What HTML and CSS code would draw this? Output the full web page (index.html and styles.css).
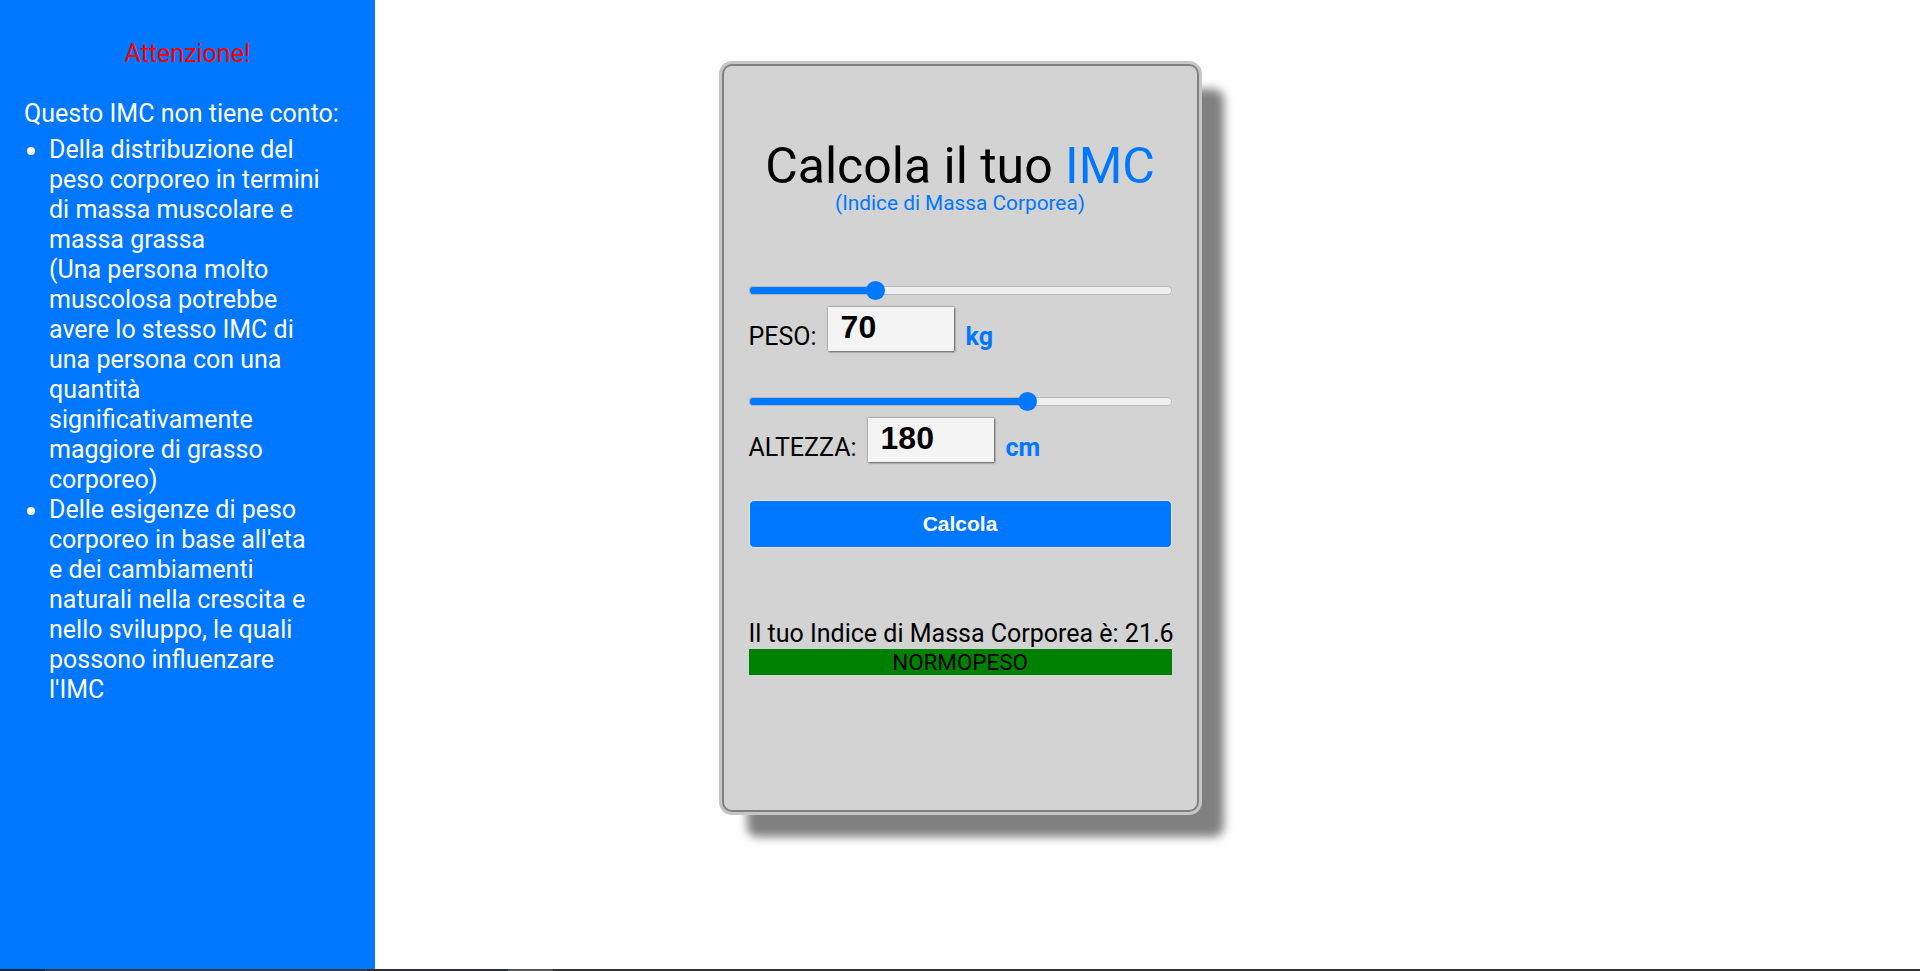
FILE: index.html
```html
<!DOCTYPE html>
<html lang="it">
<head>
<meta charset="utf-8">
<title>Calcola il tuo IMC</title>
<link rel="stylesheet" href="styles.css">
</head>
<body>
<div class="layout">
  <aside class="sidebar">
    <p class="warn">Attenzione!</p>
    <p class="intro">Questo IMC non tiene conto:</p>
    <ul class="notes">
      <li>Della distribuzione del peso corporeo in termini di massa muscolare e massa grassa<br>(Una persona molto muscolosa potrebbe avere lo stesso IMC di una persona con una quantità significativamente maggiore di grasso corporeo)</li>
      <li>Delle esigenze di peso corporeo in base all'eta e dei cambiamenti naturali nella crescita e nello sviluppo, le quali possono influenzare l'IMC</li>
    </ul>
  </aside>
  <main class="main">
    <section class="card">
      <h1 class="title">Calcola il tuo <span class="accent">IMC</span><span class="subtitle">(Indice di Massa Corporea)</span></h1>
      <input class="range range-first" type="range" min="0" max="240" value="70" style="--p:30.1%">
      <div class="field field-first">
        <label class="label" for="peso">PESO:</label>
        <input class="num" id="peso" type="text" value="70">
        <span class="unit">kg</span>
      </div>
      <input class="range range-second" type="range" min="100" max="220" value="180" style="--p:65.9%">
      <div class="field field-second">
        <label class="label" for="altezza">ALTEZZA:</label>
        <input class="num" id="altezza" type="text" value="180">
        <span class="unit">cm</span>
      </div>
      <button class="calc" type="button">Calcola</button>
      <p class="result">Il tuo Indice di Massa Corporea è: 21.6</p>
      <p class="status">NORMOPESO</p>
    </section>
  </main>
  <div class="spacer"></div>
</div>
<div class="bottombar">
  <span class="seg seg-a"></span>
  <span class="seg seg-b"></span>
  <span class="seg seg-c"></span>
  <span class="seg seg-d"></span>
  <span class="seg seg-e"></span>
</div>
</body>
</html>
```
FILE: styles.css
```css
html, body {
  margin: 0;
  padding: 0;
  background: #ffffff;
}

body {
  font-family: Roboto, "Liberation Sans", Arial, sans-serif;
  color: #000;
  overflow: hidden;
}

.layout {
  display: grid;
  grid-template-columns: 375px 1fr 375px;
  height: 971px;
}

/* ---------- sidebar ---------- */
.sidebar {
  background: #0077ff;
  color: #fff;
  font-size: 25px;
  line-height: 30px;
  padding: 39px 24px 0 24px;
}

.sidebar p {
  margin: 0;
}

.warn {
  color: #ff0000;
  text-align: center;
  margin-bottom: 30px !important;
}

.notes {
  margin: 6px 26px 0 0;
  padding: 0 0 0 25px;
}

/* ---------- main ---------- */
.main {
  display: flex;
  justify-content: center;
  align-items: flex-start;
}

.card {
  box-sizing: border-box;
  width: 477px;
  height: 748px;
  margin-top: 64px;
  padding: 0 25px;
  background: #d3d3d3;
  border: 2px solid #808080;
  border-radius: 10px;
  box-shadow: 0 0 0 3px #c6c6c6, 25px 25px 10px #808080;
  display: flex;
  flex-direction: column;
}

.title {
  margin: 74.5px 0 0 0;
  font-size: 50px;
  font-weight: 400;
  line-height: 50px;
  text-align: center;
}

.accent {
  color: #0077ff;
}

.subtitle {
  display: block;
  font-size: 20.8px;
  line-height: normal;
  color: #0077ff;
}

/* ---------- range ---------- */
.range {
  -webkit-appearance: none;
  appearance: none;
  display: block;
  width: 100%;
  height: 20px;
  margin: 0;
  padding: 0;
  background: transparent;
}

.range-first {
  margin-top: 66px;
}

.range-second {
  margin-top: 41px;
}

.range::-webkit-slider-runnable-track {
  height: 9px;
  border-radius: 5px;
  box-sizing: border-box;
  background: linear-gradient(to right, #0077ff 0, #0077ff var(--p), #efefef var(--p), #efefef 100%);
  box-shadow: inset 0 0 0 1px #b8b8b8;
}

.range::-webkit-slider-thumb {
  -webkit-appearance: none;
  appearance: none;
  width: 19px;
  height: 19px;
  margin-top: -5px;
  border-radius: 50%;
  background: #0077ff;
  border: none;
}

/* ---------- fields ---------- */
.field {
  display: flex;
  align-items: flex-end;
}

.field-first {
  margin-top: 6px;
}

.field-second {
  margin-top: 6px;
}

.label {
  font-size: 25px;
  line-height: 30px;
  margin: 0 11px -1px 0;
}

.num {
  box-sizing: border-box;
  width: 126px;
  height: 44px;
  padding: 3px 13px 5px 13px;
  margin: 0;
  border: 0;
  background: #f4f4f4;
  font-family: "Liberation Sans", Arial, sans-serif;
  font-weight: 700;
  font-size: 32px;
  line-height: 36px;
  color: #000;
  box-shadow: 0 0 2px rgba(0, 0, 0, 0.45), 1px 1px 2px rgba(0, 0, 0, 0.45);
}

.unit {
  font-size: 25px;
  line-height: 30px;
  font-weight: 700;
  color: #0077ff;
  margin: 0 0 -1px 12px;
}

/* ---------- button ---------- */
.calc {
  box-sizing: border-box;
  width: 100%;
  height: 48px;
  margin: 38px 0 0 0;
  border: 1px solid #e6e6e6;
  border-radius: 5px;
  background: #0077ff;
  color: #fff;
  font-family: "Liberation Sans", Arial, sans-serif;
  font-weight: 700;
  font-size: 21px;
  padding: 0;
}

/* ---------- result ---------- */
.result {
  margin: 71px 0 0 0;
  font-size: 25px;
  line-height: 30px;
  white-space: nowrap;
  text-align: center;
}

.status {
  margin: 0;
  background: #008000;
  color: #000;
  font-size: 22.4px;
  line-height: normal;
  text-align: center;
}

/* ---------- bottom strip ---------- */
.bottombar {
  position: fixed;
  left: 0;
  right: 0;
  bottom: 0;
  height: 2px;
  display: flex;
  background: #333;
}

.seg {
  display: block;
  height: 100%;
}

.seg-a { width: 45px; background: #1d2733; }
.seg-b { width: 322px; background: #3c3c3c; }
.seg-c { width: 141px; background: #2a2d33; }
.seg-d { width: 45px; background: #555; }
.seg-e { flex: 1; background: #333; }
```
